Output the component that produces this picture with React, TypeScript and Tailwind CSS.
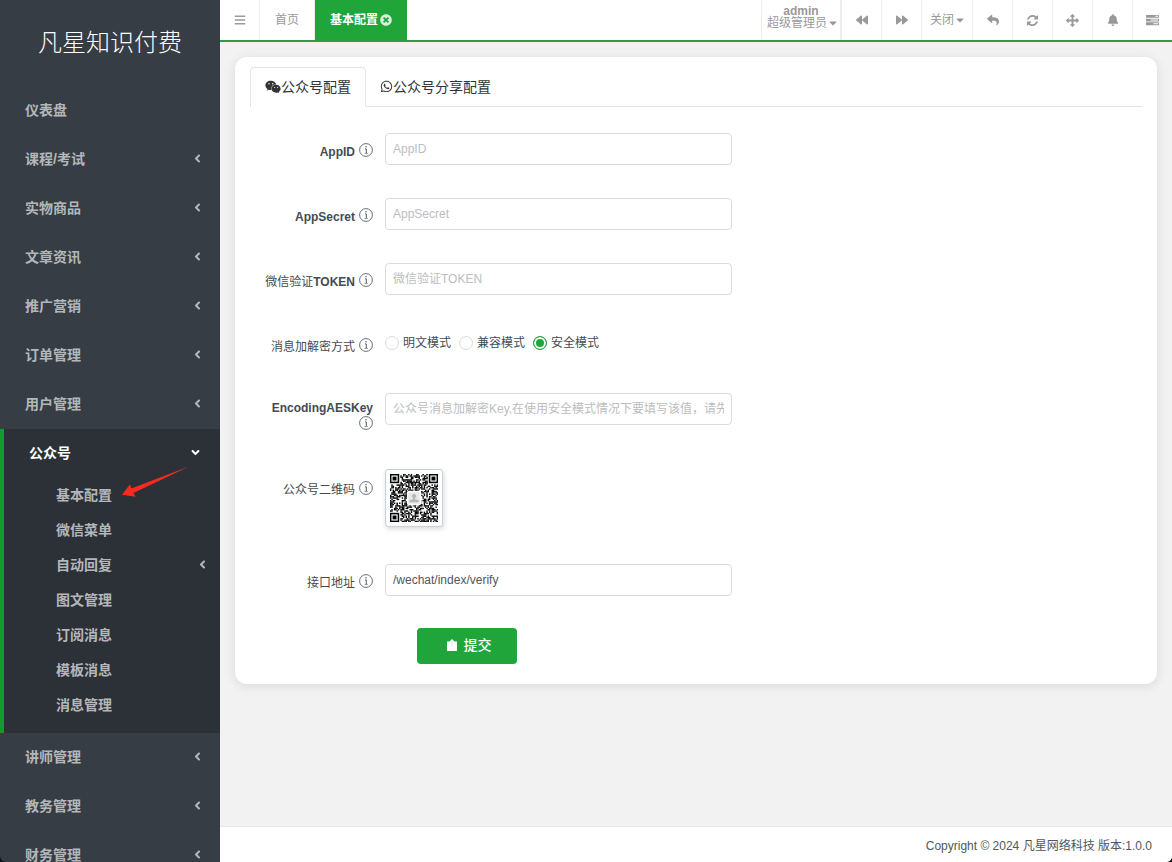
import { useState, type ReactNode } from 'react'
import {
  FaAngleDown,
  FaAngleLeft,
  FaBackward,
  FaBars,
  FaBell,
  FaCaretDown,
  FaForward,
  FaReply,
  FaTimesCircle,
  FaWeixin,
  FaWhatsapp,
} from 'react-icons/fa'

type MenuItem = {
  label: string
  arrow?: boolean
  children?: MenuItem[]
}

const MENU: MenuItem[] = [
  { label: '仪表盘' },
  { label: '课程/考试', arrow: true },
  { label: '实物商品', arrow: true },
  { label: '文章资讯', arrow: true },
  { label: '推广营销', arrow: true },
  { label: '订单管理', arrow: true },
  { label: '用户管理', arrow: true },
  {
    label: '公众号',
    children: [
      { label: '基本配置' },
      { label: '微信菜单' },
      { label: '自动回复', arrow: true },
      { label: '图文管理' },
      { label: '订阅消息' },
      { label: '模板消息' },
      { label: '消息管理' },
    ],
  },
  { label: '讲师管理', arrow: true },
  { label: '教务管理', arrow: true },
  { label: '财务管理', arrow: true },
]

const CRYPT_MODES = ['明文模式', '兼容模式', '安全模式']

const REFRESH_PATH =
  'M1639 1056q0 5-1 7-64 268-268 434.5t-478 166.5q-146 0-282.5-55t-243.5-157l-129 129q-19 19-45 19t-45-19-19-45v-448q0-26 19-45t45-19h448q26 0 45 19t19 45-19 45l-137 137q71 66 161 102t187 36q134 0 250-65t186-179q11-17 53-117 8-23 30-23h192q13 0 22.5 9.5t9.5 22.5zm25-800v448q0 26-19 45t-45 19h-448q-26 0-45-19t-19-45 19-45l138-138q-148-137-349-137-134 0-250 65t-186 179q-11 17-53 117-8 23-30 23h-199q-13 0-22.5-9.5t-9.5-22.5v-7q65-268 270-434.5t480-166.5q146 0 284 55.5t245 156.5l130-129q19-19 45-19t45 19 19 45z'

const ARROWS_PATH =
  'M1792 896q0 26-19 45l-256 256q-19 19-45 19t-45-19-19-45v-128h-384v384h128q26 0 45 19t19 45-19 45l-256 256q-19 19-45 19t-45-19l-256-256q-19-19-19-45t19-45 45-19h128v-384h-384v128q0 26-19 45t-45 19-45-19l-256-256q-19-19-19-45t19-45l256-256q19-19 45-19t45 19 19 45v128h384v-384h-128q-26 0-45-19t-19-45 19-45l256-256q19-19 45-19t45 19l256 256q19 19 19 45t-19 45-45 19h-128v384h384v-128q0-26 19-45t45-19 45 19l256 256q19 19 19 45z'

const TASKS_PATH =
  'M1024 1408h640v-128h-640v128zm-384-512h1024v-128h-1024v128zm640-512h384v-128h-384v128zm512 832v256q0 26-19 45t-45 19h-1664q-26 0-45-19t-19-45v-256q0-26 19-45t45-19h1664q26 0 45 19t19 45zm0-512v256q0 26-19 45t-45 19h-1664q-26 0-45-19t-19-45v-256q0-26 19-45t45-19h1664q26 0 45 19t19 45zm0-512v256q0 26-19 45t-45 19h-1664q-26 0-45-19t-19-45v-256q0-26 19-45t45-19h1664q26 0 45 19t19 45z'

function Glyph({ path }: { path: string }) {
  return (
    <svg viewBox="0 0 1792 1792" fill="currentColor" className="size-[13px]" aria-hidden="true">
      <path d={path} />
    </svg>
  )
}

function InfoIcon() {
  return (
    <svg viewBox="0 0 14 14" className="size-[14px] shrink-0" fill="none" stroke="currentColor" aria-hidden="true">
      <circle cx="7" cy="7" r="6.4" strokeWidth="0.8" />
      <path d="M6 5.9h1.300v4.300" strokeWidth="0.9" />
      <path d="M5.600 10.400h3.200" strokeWidth="0.6" />
      <circle cx="7" cy="3.8" r="0.7" fill="currentColor" stroke="none" />
    </svg>
  )
}

const QR_SIZE = 37

function buildQr() {
  const cells: Array<[number, number]> = []
  let seed = 20241
  const inFinder = (x: number, y: number) =>
    (x < 8 && y < 8) || (x > QR_SIZE - 9 && y < 8) || (x < 8 && y > QR_SIZE - 9)
  for (let y = 0; y < QR_SIZE; y++) {
    for (let x = 0; x < QR_SIZE; x++) {
      seed = (seed * 1103515245 + 12345) % 2147483648
      if (!inFinder(x, y) && seed / 2147483648 > 0.48) cells.push([x, y])
    }
  }
  return cells
}

const QR_CELLS = buildQr()

function QrCode() {
  return (
    <svg viewBox={`0 0 ${QR_SIZE} ${QR_SIZE}`} className="size-12" role="img" aria-label="公众号二维码">
      {QR_CELLS.map(([x, y]) => (
        <rect key={`${x}-${y}`} x={x} y={y} width="1.1" height="1.1" />
      ))}
      {[
        [0, 0],
        [QR_SIZE - 7, 0],
        [0, QR_SIZE - 7],
      ].map(([x, y]) => (
        <g key={`${x}-${y}`}>
          <rect x={x + 0.5} y={y + 0.5} width="6" height="6" fill="white" stroke="black" strokeWidth="1.2" />
          <rect x={x + 2} y={y + 2} width="3" height="3" />
        </g>
      ))}
      <rect x="13.5" y="13.5" width="10" height="10" rx="1" fill="#e6e8e8" stroke="white" />
      <circle cx="18.5" cy="17" r="1.6" fill="#b4b7b8" />
      <path d="M17.7 18h1.6v1.5l2.7.8v1.5h-7v-1.5l2.7-.8z" fill="#b4b7b8" />
    </svg>
  )
}

function Sidebar() {
  return (
    <aside className="w-[220px] shrink-0 overflow-hidden bg-[#363d45] text-[#b4b7ba]">
      <div className="flex h-[86px] items-center justify-center text-2xl font-light text-white">凡星知识付费</div>
      <nav className="text-sm font-semibold">
        <ul>
          {MENU.map((item) =>
            item.children ? (
              <li key={item.label} className="relative border-l-4 border-[#149b2e] bg-[#2c3037] pb-2.5">
                <a href="#" className="flex h-[49px] items-center justify-between pr-[18px] pb-0.5 pl-[25px] text-white">
                  {item.label}
                  <FaAngleDown className="size-[13px]" />
                </a>
                <ul>
                  {item.children.map((child) => (
                    <li key={child.label}>
                      <a href="#" className="flex h-[35px] items-center justify-between pr-[11px] pb-0.5 pl-[52px]">
                        {child.label}
                        {child.arrow && <FaAngleLeft className="size-[13px]" />}
                      </a>
                    </li>
                  ))}
                </ul>
                <svg viewBox="0 0 68 32" className="absolute top-9 left-[117px] h-8 w-[68px]" aria-hidden="true">
                  <path d="M68 1.500 10.300 23.500 9 19.300 1 29.700 14.500 31.700 12.500 28z" fill="#fb2a1c" />
                </svg>
              </li>
            ) : (
              <li key={item.label}>
                <a href="#" className="flex h-[49px] items-center justify-between pr-4 pb-0.5 pl-[25px]">
                  {item.label}
                  {item.arrow && <FaAngleLeft className="size-[13px]" />}
                </a>
              </li>
            ),
          )}
        </ul>
      </nav>
    </aside>
  )
}

function ToolButton({ label, children }: { label: string; children: ReactNode }) {
  return (
    <button
      type="button"
      aria-label={label}
      className="flex h-10 w-10 items-center justify-center border-l border-[#eeeeee]"
    >
      {children}
    </button>
  )
}

function TopBar() {
  return (
    <header className="flex h-[42px] shrink-0 justify-between border-b-2 border-[#2f9a48] bg-white text-xs text-[#999999]">
      <div className="flex">
        <button
          type="button"
          aria-label="菜单"
          className="flex h-10 w-10 items-center justify-center border-r border-[#eeeeee]"
        >
          <FaBars className="size-3" />
        </button>
        <a href="#" className="flex items-center border-r border-[#eeeeee] px-[15px]">
          首页
        </a>
        <a href="#" className="flex items-center gap-0.5 bg-[#20a53a] px-[15px] font-semibold text-white">
          基本配置
          <FaTimesCircle className="size-3 text-[#d5efd9]" />
        </a>
      </div>
      <div className="flex">
        <button
          type="button"
          className="flex h-10 w-20 flex-col items-center border-x border-[#eeeeee] pt-[5px] leading-[12px]"
        >
          <span className="font-bold">admin</span>
          <span className="flex items-center pl-1">
            超级管理员
            <FaCaretDown className="size-3" />
          </span>
        </button>
        <ToolButton label="向前">
          <FaBackward className="size-3" />
        </ToolButton>
        <ToolButton label="向后">
          <FaForward className="size-3" />
        </ToolButton>
        <button
          type="button"
          className="flex h-10 w-[51px] items-center justify-center border-l border-[#eeeeee] pl-0.5"
        >
          关闭
          <FaCaretDown className="size-3" />
        </button>
        <ToolButton label="返回">
          <FaReply className="size-3" />
        </ToolButton>
        <ToolButton label="刷新">
          <Glyph path={REFRESH_PATH} />
        </ToolButton>
        <ToolButton label="全屏">
          <Glyph path={ARROWS_PATH} />
        </ToolButton>
        <ToolButton label="通知">
          <FaBell className="size-3" />
        </ToolButton>
        <ToolButton label="任务">
          <Glyph path={TASKS_PATH} />
        </ToolButton>
      </div>
    </header>
  )
}

function FieldLabel({ htmlFor, children }: { htmlFor?: string; children: ReactNode }) {
  return (
    <label
      htmlFor={htmlFor}
      className="flex w-[123px] shrink-0 content-start items-start justify-end gap-x-1 pt-2.5 leading-[15px] text-[#444b52]"
    >
      <span className="pt-0.5">{children}</span>
      <InfoIcon />
    </label>
  )
}

function TextField({
  id,
  label,
  placeholder,
  defaultValue,
}: {
  id: string
  label: ReactNode
  placeholder?: string
  defaultValue?: string
}) {
  return (
    <div className="flex gap-3">
      <FieldLabel htmlFor={id}>{label}</FieldLabel>
      <input
        id={id}
        type="text"
        placeholder={placeholder}
        defaultValue={defaultValue}
        className="h-8 w-full max-w-[347px] rounded border border-[#d9dcdf] bg-white px-[7px] text-xs text-[#50575e] placeholder:text-[#bbbdc0]"
      />
    </div>
  )
}

function ConfigForm() {
  const [mode, setMode] = useState('安全模式')

  return (
    <form className="flex flex-col gap-[33px] pt-[26px]">
      <TextField id="appid" label={<b>AppID</b>} placeholder="AppID" />
      <TextField id="appsecret" label={<b>AppSecret</b>} placeholder="AppSecret" />
      <TextField
        id="token"
        label={
          <>
            微信验证<b>TOKEN</b>
          </>
        }
        placeholder="微信验证TOKEN"
      />
      <div className="flex h-8 gap-3">
        <FieldLabel>消息加解密方式</FieldLabel>
        <div className="flex items-center gap-2 self-start pt-[7px]">
          {CRYPT_MODES.map((name) => (
            <label key={name} className="flex items-center gap-1 text-[#444b52]">
              <input
                type="radio"
                name="mode"
                checked={mode === name}
                onChange={() => setMode(name)}
                className="size-[14px] appearance-none rounded-full border border-[#d9dcdf] bg-white checked:border-[#20a53a] checked:bg-[#20a53a] checked:shadow-[inset_0_0_0_2px_white]"
              />
              {name}
            </label>
          ))}
        </div>
      </div>
      <div className="flex h-[43px] items-start gap-3">
        <label
          htmlFor="aeskey"
          className="flex w-[123px] shrink-0 flex-col items-end pt-2 leading-[15px] font-bold text-[#444b52]"
        >
          EncodingAESKey
          <InfoIcon />
        </label>
        <input
          id="aeskey"
          type="text"
          placeholder="公众号消息加解密Key,在使用安全模式情况下要填写该值，请先在管理中心修改"
          className="h-8 w-full max-w-[347px] rounded border border-[#d9dcdf] bg-white px-[7px] text-xs text-[#50575e] placeholder:text-[#bbbdc0]"
        />
      </div>
      <div className="flex h-[62px] items-start gap-3">
        <div className="pt-0.5">
          <FieldLabel>公众号二维码</FieldLabel>
        </div>
        <a href="#" className="rounded-[3px] border border-[#c9d0d8] bg-white p-1 shadow-[1px_2px_5px_#00000026]">
          <QrCode />
        </a>
      </div>
      <TextField id="url" label="接口地址" defaultValue="/wechat/index/verify" />
      <button
        type="button"
        className="-mt-px ml-[167px] flex h-9 w-[100px] items-center justify-center gap-[7px] rounded bg-[#20a53a] pb-0.5 pl-1 text-sm font-medium text-white"
      >
        <svg viewBox="0 0 10 12" className="h-3 w-2.5" fill="currentColor" aria-hidden="true">
          <path d="M0 2.500h2.500L5 0l2.500 2.500H10V12H0z" />
          <path d="M5 2.500v4" stroke="#b9dfc0" strokeWidth="0.8" />
        </svg>
        提交
      </button>
    </form>
  )
}

export default function App() {
  return (
    <div className="h-screen bg-[#111111] font-['Liberation_Sans','Noto_Sans_CJK_SC',sans-serif] text-xs">
      <div className="flex h-full overflow-hidden rounded-b-md">
        <Sidebar />
        <div className="flex min-w-0 flex-1 flex-col bg-[#f2f2f2]">
          <TopBar />
          <main className="min-h-0 flex-1 overflow-hidden p-[15px]">
            <section className="rounded-xl bg-white px-[15px] pt-2.5 pb-5 shadow-[0_2px_12px_#0000001a]">
              <div className="flex border-b border-[#e2e4e6] text-sm text-[#333333]">
                <a
                  href="#"
                  className="-mb-px flex h-10 items-center rounded-t-sm border border-b-0 border-[#e2e4e6] bg-white px-[14px] pb-0.5"
                >
                  <FaWeixin className="size-4" />
                  公众号配置
                </a>
                <a href="#" className="flex h-[39px] items-center px-[14px]">
                  <FaWhatsapp className="size-[13px]" />
                  公众号分享配置
                </a>
              </div>
              <ConfigForm />
            </section>
          </main>
          <footer className="flex h-9 shrink-0 items-center justify-end border-t border-[#e7e7e7] bg-white px-5 pt-0.5 text-[#50575e]">
            Copyright © 2024 凡星网络科技 版本:1.0.0
          </footer>
        </div>
      </div>
    </div>
  )
}
